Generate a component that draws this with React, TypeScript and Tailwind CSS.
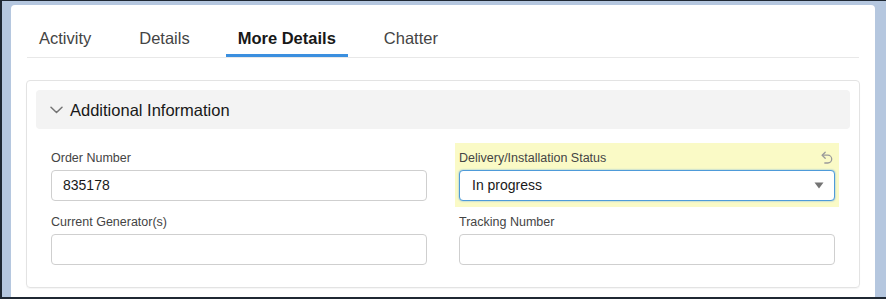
import React from "react";

function Chevron() {
  return (
    <svg width="13" height="8" viewBox="0 0 13 8" fill="none">
      <path d="M1 1.2 L6.5 6.5 L12 1.2" stroke="#747474" strokeWidth="1.5" strokeLinecap="round" strokeLinejoin="round" />
    </svg>
  );
}

function UndoIcon() {
  return (
    <svg width="12" height="13" viewBox="0 0 12 13" fill="none">
      <path d="M4.2 1.2 L1.2 4.2 L4.2 7.2" stroke="#9a9a9a" strokeWidth="1.3" strokeLinecap="round" strokeLinejoin="round" />
      <path d="M1.4 4.2 H6.8 A3.9 3.9 0 0 1 6.8 12 H3.8" stroke="#9a9a9a" strokeWidth="1.3" strokeLinecap="round" strokeLinejoin="round" />
    </svg>
  );
}

function Field({ label, value }: { label: string; value?: string }) {
  return (
    <div className="flex flex-col">
      <div className="text-[12.5px] leading-[18px] text-[#444444] mb-[3px]">{label}</div>
      <div className="h-[31px] border border-[#cfcfcf] rounded-[4px] px-[11px] flex items-center text-[14px] text-[#181818] bg-white">
        {value}
      </div>
    </div>
  );
}

export default function App() {
  const tabs = ["Activity", "Details", "More Details", "Chatter"];
  return (
    <div className="w-[886px] h-[299px] bg-[#1f2833] pt-px pl-[2px] pb-[2px] font-['Liberation_Sans',Arial,sans-serif]">
      <div className="h-full bg-[#b5c7df] pl-[9px] pr-[11px] pt-[4px]">
        <div className="h-full bg-white rounded-t-[4px] pt-[21px] px-[15px]">
          <div className="mx-px flex gap-[24px] border-b border-[#e8e8e8]">
            {tabs.map((t) => (
              <div
                key={t}
                className={
                  t === "More Details"
                    ? "h-[31px] px-3 text-[16.5px] leading-[24px] font-bold text-[#181818] border-b-[3px] border-[#3b8fdf]"
                    : "h-[31px] px-3 text-[16.5px] leading-[24px] text-[#444444]"
                }
              >
                {t}
              </div>
            ))}
          </div>

          <div className="mt-[22px] border border-[#e3e3e3] rounded-[4px] p-[9px] shadow-[0_1px_1px_rgba(0,0,0,0.04)]">
            <div className="h-[39px] bg-[#f3f3f3] rounded-[4px] flex items-center pl-[14px]">
              <Chevron />
              <span className="ml-[7px] text-[16.5px] leading-[24px] mt-[1px] text-[#181818]">Additional Information</span>
            </div>

            <div className="mt-[20px] mb-[13px] px-[15px] grid grid-cols-2 gap-x-[32px] gap-y-[12px]">
              <Field label="Order Number" value="835178" />
              <div className="-mx-[4px] px-[4px] -mt-[6px] pt-[6px] -mb-[6px] pb-[6px] bg-[#fafac6]">
                <div className="flex items-start justify-between mb-[3px]">
                  <div className="text-[12.5px] leading-[18px] text-[#444444]">Delivery/Installation Status</div>
                  <div className="mt-[2px] mr-[2px]">
                    <UndoIcon />
                  </div>
                </div>
                <div className="h-[31px] border border-[#4e9bd9] rounded-[4px] pl-[12px] pr-[10px] flex items-center justify-between text-[14px] text-[#181818] bg-white shadow-[0_0_2px_#6aaae0]">
                  <span>In progress</span>
                  <svg width="10" height="7" viewBox="0 0 10 7">
                    <path d="M0.5 0.5 H9.5 L5 6.5 Z" fill="#747474" />
                  </svg>
                </div>
              </div>
              <Field label="Current Generator(s)" />
              <Field label="Tracking Number" />
            </div>
          </div>
        </div>
      </div>
    </div>
  );
}
